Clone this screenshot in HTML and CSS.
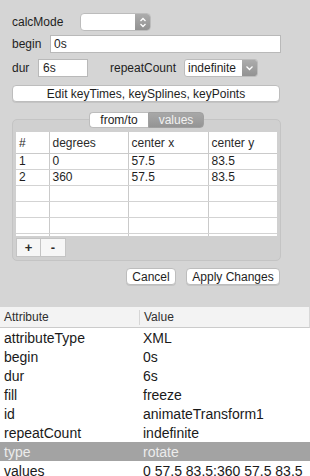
FILE: index.html
```html
<!DOCTYPE html>
<html lang="en">
<head>
    <meta charset="UTF-8">
    <meta name="viewport" content="width=device-width, initial-scale=1.0">
    <title>animateTransform</title>
    <link rel="stylesheet" href="styles.css">
</head>
<body>
    <div class="editor">
        <div class="row row-calc">
            <span class="label lbl-calc">calcMode</span>
            <div class="select select-calc">
                <span class="select-text"></span>
                <span class="select-arrow">
                    <svg width="8" height="11" viewBox="0 0 8 11"><path d="M1.5 4 L4 1.5 L6.5 4 M1.5 7 L4 9.5 L6.5 7" fill="none" stroke="#fff" stroke-width="1.3"/></svg>
                </span>
            </div>
        </div>

        <div class="row row-begin">
            <span class="label lbl-begin">begin</span>
            <input class="field field-begin" type="text" value="0s">
        </div>

        <div class="row row-dur">
            <span class="label lbl-dur">dur</span>
            <input class="field field-dur" type="text" value="6s">
            <span class="label lbl-repeat">repeatCount</span>
            <div class="select select-repeat">
                <span class="select-text">indefinite</span>
                <span class="select-arrow">
                    <svg width="9" height="6" viewBox="0 0 9 6"><path d="M1.5 1.5 L4.5 4.5 L7.5 1.5" fill="none" stroke="#fff" stroke-width="1.3"/></svg>
                </span>
            </div>
        </div>

        <button class="btn btn-edit">Edit keyTimes, keySplines, keyPoints</button>

        <div class="tabs">
            <span class="tab tab-active">from/to</span>
            <span class="tab">values</span>
        </div>

        <div class="group">
            <div class="grid-wrap">
                <table class="grid">
                    <colgroup>
                        <col style="width: 33px">
                        <col style="width: 79px">
                        <col style="width: 80px">
                        <col>
                    </colgroup>
                    <thead>
                        <tr><th>#</th><th>degrees</th><th>center x</th><th>center y</th></tr>
                    </thead>
                    <tbody>
                        <tr><td>1</td><td>0</td><td>57.5</td><td>83.5</td></tr>
                        <tr><td>2</td><td>360</td><td>57.5</td><td>83.5</td></tr>
                        <tr><td></td><td></td><td></td><td></td></tr>
                        <tr><td></td><td></td><td></td><td></td></tr>
                        <tr><td></td><td></td><td></td><td></td></tr>
                        <tr><td></td><td></td><td></td><td></td></tr>
                    </tbody>
                </table>
            </div>
            <div class="grid-buttons">
                <button class="sq-btn sq-plus">+</button>
                <button class="sq-btn sq-minus">-</button>
            </div>
        </div>

        <div class="actions">
            <button class="btn btn-cancel">Cancel</button>
            <button class="btn btn-apply">Apply Changes</button>
        </div>
    </div>

    <div class="attrs">
        <div class="attr-head">
            <span class="attr-name">Attribute</span>
            <span class="attr-value">Value</span>
        </div>
        <div class="attr-row"><span class="attr-name">attributeType</span><span class="attr-value">XML</span></div>
        <div class="attr-row"><span class="attr-name">begin</span><span class="attr-value">0s</span></div>
        <div class="attr-row"><span class="attr-name">dur</span><span class="attr-value">6s</span></div>
        <div class="attr-row"><span class="attr-name">fill</span><span class="attr-value">freeze</span></div>
        <div class="attr-row"><span class="attr-name">id</span><span class="attr-value">animateTransform1</span></div>
        <div class="attr-row"><span class="attr-name">repeatCount</span><span class="attr-value">indefinite</span></div>
        <div class="attr-row selected"><span class="attr-name">type</span><span class="attr-value">rotate</span></div>
        <div class="attr-row"><span class="attr-name">values</span><span class="attr-value">0 57.5 83.5;360 57.5 83.5</span></div>
    </div>
</body>
</html>
```

FILE: styles.css
```css
body {
    margin: 0;
    padding: 0;
    font-family: "Liberation Sans", Arial, sans-serif;
    font-size: 12px;
    color: #1e1e1e;
    background-color: #ffffff;
    width: 310px;
    height: 476px;
    overflow: hidden;
}

.editor {
    background-color: #d5d5d5;
    padding: 13px 29px 0 12px;
    height: 307px;
    box-sizing: border-box;
}

.row {
    display: flex;
    align-items: center;
    height: 18px;
}

.row-begin {
    margin-top: 4px;
}

.row-dur {
    margin-top: 6px;
}

.label {
    flex-shrink: 0;
}

.lbl-calc {
    width: 68px;
}

.lbl-begin {
    width: 38px;
}

.lbl-dur {
    width: 26px;
}

.lbl-repeat {
    width: 74px;
    margin-left: 22px;
}

.field {
    box-sizing: border-box;
    height: 18px;
    margin: 0;
    border: 1px solid #b9b9b9;
    background-color: #ffffff;
    font-family: inherit;
    font-size: 12px;
    color: #1e1e1e;
    padding: 0 3px;
    outline: none;
}

.field-begin {
    width: 231px;
}

.field-dur {
    width: 50px;
    padding-left: 4px;
}

.select {
    box-sizing: border-box;
    height: 18px;
    display: flex;
    border: 1px solid #bcbcbc;
    border-radius: 4px;
    background-color: #ffffff;
    overflow: hidden;
}

.select-calc {
    width: 71px;
}

.select-repeat {
    width: 74px;
    border-radius: 3px;
}

.select-text {
    flex-grow: 1;
    padding-left: 3px;
    line-height: 16px;
}

.select-arrow {
    width: 15px;
    display: flex;
    align-items: center;
    justify-content: center;
    background: linear-gradient(#acacac, #929292);
}

.btn {
    box-sizing: border-box;
    height: 17px;
    margin: 0;
    padding: 0;
    border: 1px solid #bdbdbd;
    border-radius: 4px;
    background-color: #ffffff;
    font-family: inherit;
    font-size: 12px;
    color: #1e1e1e;
    box-shadow: 0 1px 0 rgba(0, 0, 0, 0.08);
}

.btn-edit {
    display: block;
    width: 268px;
    margin-top: 8px;
}

.tabs {
    position: relative;
    z-index: 1;
    display: flex;
    justify-content: center;
    margin-top: 10px;
}

.tab {
    box-sizing: border-box;
    height: 16px;
    line-height: 14px;
    text-align: center;
    width: 56px;
    border: 1px solid #a0a0a0;
    background: linear-gradient(#a8a8a8, #949494);
    color: #f2f2f2;
    border-radius: 0 4px 4px 0;
}

.tab-active {
    width: 59px;
    background: #ffffff;
    color: #1e1e1e;
    border-color: #bdbdbd;
    border-right: none;
    border-radius: 4px 0 0 4px;
}

.group {
    box-sizing: border-box;
    height: 142px;
    margin-top: -9px;
    padding: 12px 3px 3px 3px;
    border: 1px solid #c4c4c4;
    border-radius: 5px;
    background-color: #d0d0d0;
}

.grid-wrap {
    height: 104px;
    overflow: hidden;
    background-color: #ffffff;
}

.grid {
    width: 100%;
    table-layout: fixed;
    border-collapse: collapse;
}

.grid th,
.grid td {
    padding: 0 0 0 3px;
    text-align: left;
    font-weight: normal;
    border-right: 1px solid #cacaca;
    border-bottom: 1px solid #d3d3d3;
    white-space: nowrap;
    overflow: hidden;
}

.grid th:last-child,
.grid td:last-child {
    border-right: none;
}

.grid th {
    height: 21px;
    color: #2a2a2a;
    border-bottom-color: #cacaca;
}

.grid td {
    height: 15px;
    line-height: 15px;
}

.grid-buttons {
    display: flex;
    margin-top: 2px;
}

.sq-btn {
    box-sizing: border-box;
    height: 19px;
    margin: 0;
    padding: 0;
    border: 1px solid #c4c4c4;
    background-color: #f6f6f6;
    font-family: inherit;
    font-size: 13px;
    font-weight: bold;
    color: #2a2a2a;
}

.sq-plus {
    width: 25px;
}

.sq-minus {
    width: 26px;
    margin-left: -1px;
}

.actions {
    display: flex;
    justify-content: flex-end;
    margin-top: 7px;
    padding-right: 1px;
}

.btn-cancel {
    width: 50px;
}

.btn-apply {
    width: 94px;
    margin-left: 10px;
}

.attrs {
    font-size: 14px;
    color: #1a1a1a;
}

.attr-head {
    box-sizing: border-box;
    height: 21px;
    display: grid;
    grid-template-columns: 139px 1fr;
    align-items: center;
    background-color: #f3f3f3;
    border-bottom: 1px solid #cbcbcb;
    border-right: 1px solid #d8d8d8;
    font-size: 12px;
    color: #2e2e2e;
}

.attr-head .attr-value {
    border-left: 1px solid #d6d6d6;
    height: 15px;
    line-height: 15px;
}

.attr-row {
    height: 19px;
    display: grid;
    grid-template-columns: 139px 1fr;
    align-items: center;
}

.attr-name {
    padding-left: 4px;
}

.attr-value {
    padding-left: 4px;
    white-space: nowrap;
}

.attr-row.selected {
    background-color: #a3a3a3;
    color: #ececec;
}
```
